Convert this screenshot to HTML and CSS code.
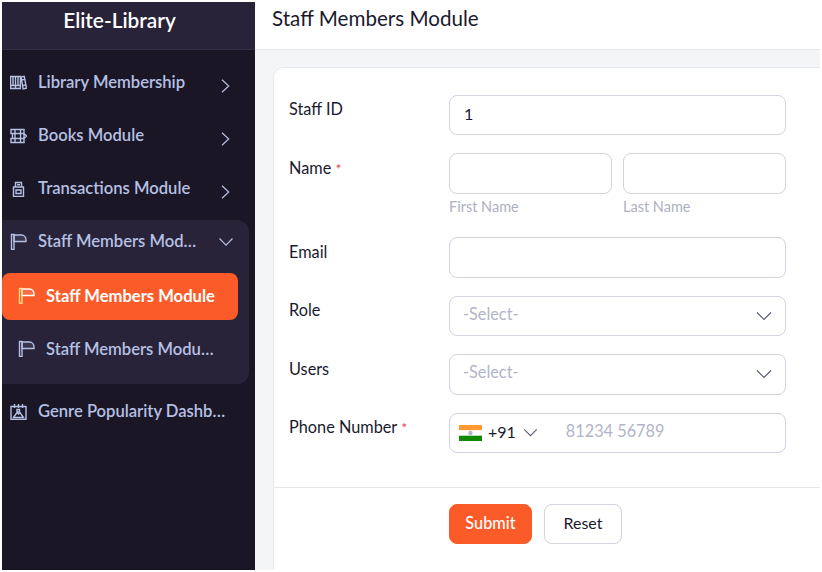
FILE: index.html
```html
<!DOCTYPE html>
<html lang="en">
<head>
<meta charset="utf-8">
<title>Staff Members Module</title>
<link rel="stylesheet" href="styles.css">
</head>
<body>
<div class="app">
  <aside class="sidebar">
    <div class="brand">Elite-Library</div>
    <nav class="nav">
      <a class="item">
        <svg class="ico" viewBox="0 0 17 17"><path d="M.6 2.500h4.900v12H.6zM5.500 2.500h4.900v12H5.500zM11 3l3.200-.7 2.300 11.800-3.300.7zM3 2.500v9M8 2.500v9M.6 11.500h9.800M11.500 6l3.200-.6M13 11.500l3-.6"/></svg>
        <span class="label">Library Membership</span>
        <svg class="chev" viewBox="0 0 9 14"><path d="M1 .8 7.700 7 1 13.200"/></svg>
      </a>
      <a class="item">
        <svg class="ico" viewBox="0 0 17 17"><path d="M1 2.500h13v4H1zM1 11.500h13v4H1zM2.500 6.500h11.500v5H2.500zM5 2.500v13M10.500 2.500v13M14 6.500l2.500 2.500-2.500 2.500"/></svg>
        <span class="label">Books Module</span>
        <svg class="chev" viewBox="0 0 9 14"><path d="M1 .8 7.700 7 1 13.200"/></svg>
      </a>
      <a class="item">
        <svg class="ico" viewBox="0 0 17 17"><path d="M3.500 7h10v9.500h-10zM5.500 2.500h6V7h-6zM6 10h5v3.500H6zM7 4.700h3"/></svg>
        <span class="label">Transactions Module</span>
        <svg class="chev" viewBox="0 0 9 14"><path d="M1 .8 7.700 7 1 13.200"/></svg>
      </a>
      <div class="group">
        <a class="item">
          <svg class="ico" viewBox="0 0 17 17"><path class="flagcloth" d="M4 2h7.500c2.500 0 4.500 2.200 4.500 5v1.500H4z"/><path class="pole" d="M1.500 1.500H4v15H1.500z"/></svg>
          <span class="label">Staff Members Module</span>
          <svg class="chev open" viewBox="0 0 16 10"><path d="M1.500 1.500 8 8.200 14.500 1.500"/></svg>
        </a>
        <a class="sub active">
          <svg class="ico" viewBox="0 0 17 17"><path class="flagcloth" d="M4 2h7.500c2.500 0 4.500 2.200 4.500 5v1.500H4z"/><path class="pole" d="M1.500 1.500H4v15H1.500z"/></svg>
          <span class="label">Staff Members Module</span>
        </a>
        <a class="sub">
          <svg class="ico" viewBox="0 0 17 17"><path class="flagcloth" d="M4 2h7.500c2.500 0 4.500 2.200 4.500 5v1.500H4z"/><path class="pole" d="M1.500 1.500H4v15H1.500z"/></svg>
          <span class="label">Staff Members Module Report</span>
        </a>
      </div>
      <a class="item last">
        <svg class="ico" viewBox="0 0 17 17"><path d="M1 3.500h15v13H1zM4.500 1v4M8.500 1v4M12.500 1v4M3.500 14.500l3.500-5 1.500 1.500 1.500-1.500 3.500 5zM7 6.500h2.500V9H7z"/></svg>
        <span class="label">Genre Popularity Dashboard</span>
      </a>
    </nav>
  </aside>
  <main class="main">
    <header class="topbar"><h1 class="title">Staff Members Module</h1></header>
    <section class="content">
      <form class="card">
        <div class="fields">
          <div class="row">
            <label class="flabel">Staff ID</label>
            <div class="control"><div class="input">1</div></div>
          </div>
          <div class="row">
            <label class="flabel">Name <span class="req">*</span></label>
            <div class="control two">
              <div class="col"><div class="input"></div><div class="help">First Name</div></div>
              <div class="col"><div class="input"></div><div class="help">Last Name</div></div>
            </div>
          </div>
          <div class="row">
            <label class="flabel">Email</label>
            <div class="control"><div class="input"></div></div>
          </div>
          <div class="row">
            <label class="flabel">Role</label>
            <div class="control"><div class="input select"><span class="ph">-Select-</span>
              <svg class="down" viewBox="0 0 16 10"><path d="M1 1.500 8 8.500 15 1.500"/></svg></div></div>
          </div>
          <div class="row">
            <label class="flabel">Users</label>
            <div class="control"><div class="input select"><span class="ph">-Select-</span>
              <svg class="down" viewBox="0 0 16 10"><path d="M1 1.500 8 8.500 15 1.500"/></svg></div></div>
          </div>
          <div class="row">
            <label class="flabel">Phone Number <span class="req">*</span></label>
            <div class="control"><div class="input phone">
              <svg class="flag" viewBox="0 0 23 16"><rect width="23" height="5.400" fill="#f93"/><rect y="5.400" width="23" height="5.300" fill="#fff"/><rect y="10.700" width="23" height="5.300" fill="#128807"/><circle cx="11.500" cy="8" r="2.200" fill="#b5b5d8"/></svg>
              <span class="code">+91</span>
              <svg class="cdown" viewBox="0 0 16 10"><path d="M1 1.500 8 8.500 15 1.500"/></svg>
              <span class="ph num">81234 56789</span>
            </div></div>
          </div>
        </div>
        <div class="actions">
          <button type="button" class="btn primary">Submit</button>
          <button type="button" class="btn">Reset</button>
        </div>
      </form>
    </section>
  </main>
</div>
</body>
</html>
```
FILE: styles.css
```css
* { box-sizing: border-box; }
html, body { height: 100%; }
body {
  margin: 0;
  padding: 2px;
  background: #fff;
  font-family: "Lato", "Liberation Sans", sans-serif;
  overflow: hidden;
}
.app { display: flex; height: 568px; width: 818px; overflow: hidden; }

.sidebar { width: 253px; flex: none; background: #1a1625; display: flex; flex-direction: column; }
.brand {
  height: 48px;
  background: #282338;
  border-bottom: 1px solid #342f45;
  color: #fff;
  font-size: 20.800px;
  font-weight: 600;
  display: flex;
  align-items: center;
  justify-content: center;
  padding: 0 18px 12px 0;
}
.nav { padding-top: 11px; padding-right: 6px; display: flex; flex-direction: column; }
.item {
  height: 42px;
  margin-bottom: 11px;
  display: flex;
  align-items: center;
  padding-left: 8px;
  color: #b6c0e4;
  font-size: 16.600px;
  font-weight: 600;
}
.ico { width: 17px; height: 17px; flex: none; fill: none; stroke: currentColor; stroke-width: 1.400; margin-right: 11px; }
.flagcloth { fill: currentColor; fill-opacity: .12; }
.active .pole { stroke: #ffd98a; }
.label { flex: 1; min-width: 0; white-space: nowrap; overflow: hidden; text-overflow: ellipsis; line-height: 22px; }
.chev { width: 9px; height: 14px; flex: none; fill: none; stroke: currentColor; stroke-width: 1.200; margin: 7px 19px 0 23px; }
.chev.open { width: 16px; height: 10px; margin: 2px 15px 0 20px; }
.group { background: #282338; border-radius: 0 12px 12px 0; padding-bottom: 7px; margin-bottom: 6px; }
.sub {
  height: 47px;
  width: 236px;
  margin-bottom: 5px;
  display: flex;
  align-items: center;
  padding: 0 22px 0 16px;
  color: #b6c0e4;
  font-size: 16.600px;
  font-weight: 600;
  border-radius: 0 8px 8px 0;
}
.active { background: #fb5b28; color: #fff; border-radius: 8px; font-weight: 700; padding-bottom: 2px; }
.item.last { margin: 0; padding-right: 20px; }

.main { flex: 1; min-width: 0; display: flex; flex-direction: column; background: #f4f5f7; }
.topbar { height: 48px; flex: none; background: #fff; border-bottom: 1px solid #e6e7eb; padding: 0 17px; }
.title { margin: 0; font-size: 20.600px; font-weight: 400; color: #1a1a2e; line-height: 32px; }
.content { flex: 1; padding: 17px 0 0 18px; min-height: 0; }
.card {
  background: #fff;
  border: 1px solid #e8e9ee;
  border-right: 0;
  border-bottom: 0;
  border-radius: 10px 0 0 0;
  height: 100%;
}
.fields { padding: 27px 0 34px 15px; display: flex; flex-direction: column; gap: 18px; border-bottom: 1px solid #e6e7eb; }
.row { display: flex; align-items: flex-start; }
.flabel { width: 160px; flex: none; font-size: 16.300px; color: #1a1a2e; line-height: 20px; padding-top: 4.450px; }
.req { color: #f0405e; font-size: 14px; }
.control { width: 337px; }
.control.two { display: flex; gap: 11px; }
.col { flex: 1; min-width: 0; }
.input {
  height: 40.400px;
  border: 1px solid #d2d2e0;
  border-radius: 8px;
  background: #fff;
  padding: 0 14px 3px;
  display: flex;
  align-items: center;
  font-size: 16px;
  color: #1a1a2e;
}
.help { font-size: 14.500px; color: #adb0c2; line-height: 18px; padding-top: 4px; height: 25.600px; }
.select { justify-content: space-between; padding-left: 13px; }
.ph { color: #b2b4c8; font-size: 16.300px; margin-bottom: 2px; }
.down { width: 16px; height: 10px; fill: none; stroke: #5b6078; stroke-width: 1.200; margin: 3px -1px 0 0; }
.phone { padding-left: 9px; }
.flag { width: 23px; height: 16px; flex: none; margin: 3px 6px 0 0; }
.code { font-size: 16px; }
.cdown { width: 15px; height: 9px; flex: none; fill: none; stroke: #5b6078; stroke-width: 1.200; margin: 3px 0 0 7px; }
.num { margin-left: 28px; }
.actions { padding: 16px 0 0 175px; display: flex; gap: 12px; }
.btn {
  height: 40px;
  width: 78px;
  border: 1px solid #d2d2e0;
  border-radius: 8px;
  background: #fff;
  color: #1a1a2e;
  font-family: inherit;
  font-size: 16px;
  padding: 0 0 2px;
}
.btn.primary { width: 83px; background: #fb5b28; border-color: #fb5b28; color: #fff; font-weight: 500; font-size: 16.300px; }
```
